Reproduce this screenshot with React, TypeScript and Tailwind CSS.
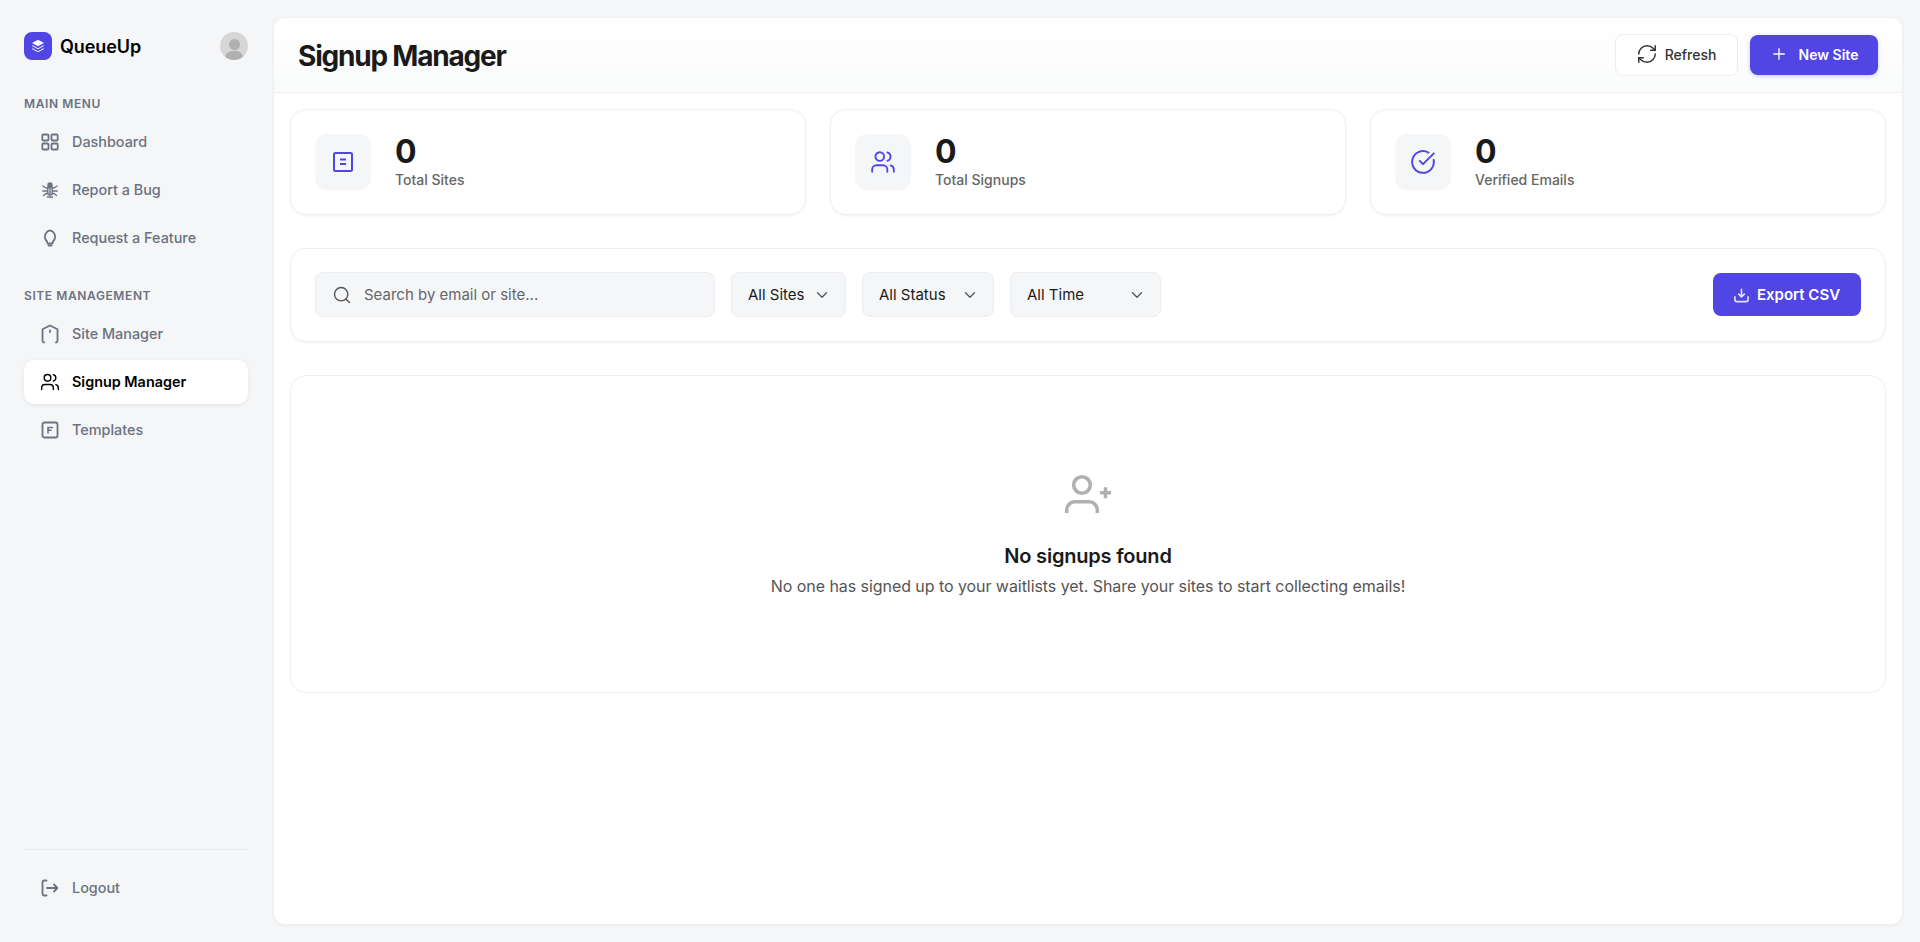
import React from "react";
import { Users, RefreshCw, Plus, Search, ChevronDown, CircleCheckBig } from "lucide-react";

const P = { fill: "none", stroke: "currentColor", strokeWidth: 1.8, strokeLinecap: "round" as const, strokeLinejoin: "round" as const };

function GridIcon() {
  return (
    <svg width="20" height="20" viewBox="0 0 20 20" {...P}>
      <rect x="2.300" y="2.500" width="6.200" height="6" rx="1" />
      <rect x="11.500" y="2.500" width="6.200" height="6" rx="1" />
      <rect x="2.300" y="11.500" width="6.200" height="6" rx="1" />
      <rect x="11.500" y="11.500" width="6.200" height="6" rx="1" />
    </svg>
  );
}
function BugIcon() {
  return (
    <svg width="20" height="20" viewBox="0 0 20 20" {...P} strokeWidth={1.4}>
      <path d="M8 5a2 2 0 0 1 4 0v1.500H8z" fill="currentColor" />
      <rect x="7.800" y="7" width="4.400" height="8" rx="2" />
      <path d="M10 8v6M3 6l3 2h1.500M17 6l-3 2h-1.500M2.800 11h4.500M17.200 11h-4.500M3.500 15.500l2.500-2h1.500M16.500 15.500l-2.500-2h-1.500M7.500 17h5" />
    </svg>
  );
}
function BulbIcon() {
  return (
    <svg width="20" height="20" viewBox="0 0 20 20" {...P}>
      <path d="M7.500 15.500c0-1.800-.8-2.800-2-4A6.500 6.500 0 0 1 10 2.300a6.500 6.500 0 0 1 4.500 9.200c-1.200 1.200-2 2.200-2 4z" />
      <path d="M8.500 17.500h3" />
    </svg>
  );
}
function SiteIcon() {
  return (
    <svg width="20" height="20" viewBox="0 0 20 20" {...P}>
      <path d="M4 18.500c-1-.2-1.500-.6-1.500-1.400V5.200L10 1.500l7.500 3.700v11.900c0 .8-.5 1.200-1.500 1.400" />
      <path d="M10 6.500v1.500" />
    </svg>
  );
}
function TemplateIcon() {
  return (
    <svg width="20" height="20" viewBox="0 0 20 20" {...P}>
      <rect x="2.500" y="2.500" width="15" height="15" rx="1.800" />
      <path d="M8 13V7.500h4.500M8 10.200h3" strokeWidth={1.6} />
    </svg>
  );
}
function LogoutIcon() {
  return (
    <svg width="20" height="20" viewBox="0 0 20 20" {...P}>
      <path d="M6.500 2.500H4c-.9 0-1.500.6-1.500 1.500v12c0 .9.600 1.500 1.500 1.500h2.500" />
      <path d="M7 10h10.500M14 6.500l3.500 3.500-3.500 3.500" />
    </svg>
  );
}
function LayersIcon() {
  return (
    <svg width="16" height="16" viewBox="0 0 16 16" fill="#fff">
      <path d="M8 1.800 14 5 8 8.200 2 5z" />
      <path d="M2.600 7.300 8 10.200l5.400-2.900L14 8l-6 3.200L2 8z" />
      <path d="M2.600 10.300 8 13.200l5.400-2.900.6.700-6 3.200L2 11z" />
    </svg>
  );
}
function SiteDocIcon() {
  return (
    <svg width="22" height="22" viewBox="0 0 22 22" fill="none" stroke="#5145e4" strokeWidth="2">
      <rect x="2" y="2" width="18" height="18" rx="1.500" />
      <path d="M8 8.500h6M8 13h6" />
    </svg>
  );
}
function DownloadIcon() {
  return (
    <svg width="15" height="15" viewBox="0 0 16 16" fill="none" stroke="#fff" strokeWidth="1.700" strokeLinecap="round" strokeLinejoin="round" opacity="0.85">
      <path d="M8 1.500V9M5 6.500 8 9.500l3-3" />
      <path d="M1 9.500v3c0 1.200.8 2 2 2h10c1.200 0 2-.8 2-2v-3" />
    </svg>
  );
}
function EmptyIcon() {
  return (
    <svg width="48" height="40" viewBox="0 0 48 40" fill="none" stroke="#b0b0b0" strokeWidth="3.600" className="mr-[3px]">
      <circle cx="19" cy="12" r="8.300" />
      <path d="M3.700 40v-3c0-4.500 3.500-8.300 8-8.300h14.600c4.500 0 8 3.800 8 8.300v3" />
      <path d="M37 19.700h11M42.500 14.200v11" strokeWidth="3.500" />
    </svg>
  );
}

function NavItem({ icon, label, active }: { icon: React.ReactNode; label: string; active?: boolean }) {
  return (
    <div
      className={
        active
          ? "flex h-11 items-center gap-3 rounded-[10px] bg-white pl-4 text-[14.400px] font-semibold text-black shadow-[0_1px_4px_rgba(0,0,0,0.08)]"
          : "flex h-11 items-center gap-3 rounded-[10px] pl-4 text-[14.400px] font-medium text-[#6b7280]"
      }
    >
      <span className="flex w-5 justify-center">{icon}</span>
      {label}
    </div>
  );
}

function Stat({ icon, label }: { icon: React.ReactNode; label: string }) {
  return (
    <div className="flex h-[106px] items-center gap-6 rounded-2xl border border-[#f0f0f2] bg-white pl-6 shadow-[0_1px_3px_rgba(0,0,0,0.05)]">
      <div className="flex h-14 w-14 items-center justify-center rounded-xl bg-[#f5f6f8]">{icon}</div>
      <div>
        <div className="text-[32px] leading-[36px] font-bold text-[#1a1a1a]">0</div>
        <div className="text-[14px] leading-[20px] font-medium text-[#666]">{label}</div>
      </div>
    </div>
  );
}

function Select({ label, width }: { label: string; width: string }) {
  return (
    <div className={`flex h-[45px] items-center justify-between rounded-lg border border-[#ecedf0] bg-[#f5f6f8] pt-[2px] pr-[14px] pl-4 text-[15px] text-[#1a1a1a] ${width}`}>
      {label}
      <ChevronDown size={18} strokeWidth={1.7} className="text-[#555]" />
    </div>
  );
}

export default function App() {
  return (
    <div className="flex h-screen overflow-hidden bg-[#f5f6f8] font-['Inter',sans-serif]">
      <aside className="flex w-[273px] shrink-0 flex-col pt-8 pr-[25px] pb-[32px] pl-6">
        <div className="flex h-7 items-center justify-between">
          <div className="flex items-center gap-2">
            <div className="flex h-7 w-7 items-center justify-center rounded-lg bg-[#5145e4]">
              <LayersIcon />
            </div>
            <span className="text-[18px] font-semibold tracking-[-0.1px] text-black">QueueUp</span>
          </div>
          <div className="relative h-7 w-7 overflow-hidden rounded-full bg-[#d6d6d6]">
            <div className="absolute top-[7px] left-[8.500px] h-[11px] w-[11px] rounded-full bg-[#b0b0b0]" />
            <div className="absolute top-[19px] left-[5px] h-[14px] w-[18px] rounded-full bg-[#b0b0b0]" />
          </div>
        </div>

        <div className="mt-[36px] mb-[8px] text-[12px] leading-[16px] font-semibold tracking-[0.6px] text-[#6b7280] uppercase">Main Menu</div>
        <nav className="flex flex-col gap-1">
          <NavItem icon={<GridIcon />} label="Dashboard" />
          <NavItem icon={<BugIcon />} label="Report a Bug" />
          <NavItem icon={<BulbIcon />} label="Request a Feature" />
        </nav>

        <div className="mt-[28px] mb-[8px] text-[12px] leading-[16px] font-semibold tracking-[0.6px] text-[#6b7280] uppercase">Site Management</div>
        <nav className="flex flex-col gap-1">
          <NavItem icon={<SiteIcon />} label="Site Manager" />
          <NavItem icon={<Users size={24} strokeWidth={1.7} />} label="Signup Manager" active />
          <NavItem icon={<TemplateIcon />} label="Templates" />
        </nav>

        <div className="mt-auto border-t border-[#e8e9ec] pt-[16px]">
          <NavItem icon={<LogoutIcon />} label="Logout" />
        </div>
      </aside>

      <main className="mt-[17px] mr-[17px] mb-[17px] flex flex-1 flex-col overflow-hidden rounded-xl border border-[#eeeff1] bg-white shadow-[0_1px_3px_rgba(0,0,0,0.04)]">
        <header className="flex h-[75px] shrink-0 items-center justify-between border-b border-[#eeeff1] bg-gradient-to-b from-white to-[#fafbfc] pr-6 pl-6">
          <h1 className="mt-[2px] text-[28px] font-bold tracking-[-1.2px] text-[#1a1a1a]">Signup Manager</h1>
          <div className="flex items-center gap-3">
            <button className="flex h-[42px] w-[123px] items-center justify-center gap-[7px] rounded-lg border border-[#ecedf0] bg-white pr-[1px] pb-[2px] text-[14px] font-medium text-[#333]">
              <RefreshCw size={22} strokeWidth={1.6} />
              Refresh
            </button>
            <button className="flex h-10 w-[128px] items-center justify-center gap-[11px] rounded-lg bg-[#5145e4] pb-[2px] text-[14px] font-semibold text-white shadow-[0_1px_4px_rgba(81,69,228,0.3)]">
              <Plus size={18} strokeWidth={1.8} />
              New Site
            </button>
          </div>
        </header>

        <div className="flex flex-col px-4 pt-4">
          <div className="grid grid-cols-3 gap-6">
            <Stat icon={<SiteDocIcon />} label="Total Sites" />
            <Stat icon={<Users size={26} strokeWidth={1.7} className="text-[#5145e4]" />} label="Total Signups" />
            <Stat icon={<CircleCheckBig size={26} strokeWidth={1.8} className="text-[#5145e4]" />} label="Verified Emails" />
          </div>

          <div className="mt-[33px] flex h-[94px] items-center rounded-2xl border border-[#f0f0f2] bg-white px-6 pb-[2px] shadow-[0_1px_3px_rgba(0,0,0,0.05)]">
            <div className="flex h-[45px] w-[400px] items-center gap-[12px] rounded-lg border border-[#ecedf0] bg-[#f5f6f8] pt-[2px] pl-4 text-[15px] text-[#666]">
              <Search size={20} strokeWidth={1.7} className="text-[#555]" />
              Search by email or site...
            </div>
            <div className="ml-4 flex items-center gap-4">
              <Select label="All Sites" width="w-[115px]" />
              <Select label="All Status" width="w-[132px]" />
              <Select label="All Time" width="w-[151px]" />
            </div>
            <button className="ml-auto flex h-[43px] w-[148px] items-center justify-center gap-[8px] rounded-lg bg-[#5145e4] pt-[2px] text-[15px] font-semibold text-white">
              <DownloadIcon />
              Export CSV
            </button>
          </div>

          <div className="mt-[33px] flex h-[318px] flex-col items-center rounded-2xl border border-[#f0f0f2] bg-white pt-[97px] shadow-[0_1px_2px_rgba(0,0,0,0.02)]">
            <EmptyIcon />
            <h3 className="mt-[29px] text-[20px] leading-[28px] font-semibold tracking-[-0.2px] text-[#1a1a1a]">No signups found</h3>
            <p className="mt-[4px] text-[16px] leading-[24px] tracking-[-0.06px] text-[#555]">No one has signed up to your waitlists yet. Share your sites to start collecting emails!</p>
          </div>
        </div>
      </main>
    </div>
  );
}
